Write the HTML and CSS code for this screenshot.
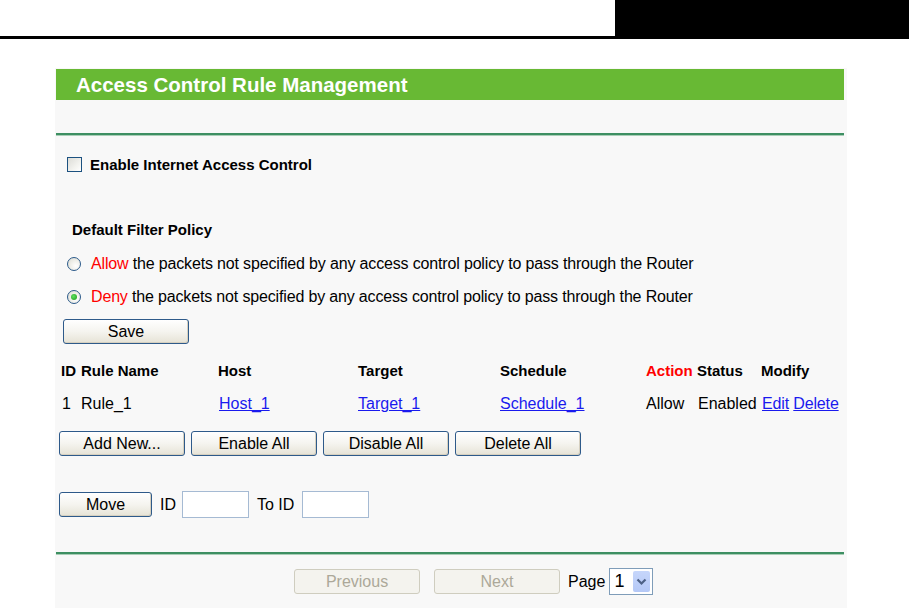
FILE: index.html
```html
<!DOCTYPE html>
<html>
<head>
<meta charset="utf-8">
<link rel="stylesheet" href="styles.css">
</head>
<body>
<div class="topbar">
  <div class="topbar-left"></div>
  <div class="topbar-right"></div>
</div>
<div class="panel">
  <div class="title">Access Control Rule Management</div>
  <div class="rule rule-top"></div>
  <div class="row row-check">
    <span class="checkbox"></span>
    <span class="bold">Enable Internet Access Control</span>
  </div>
  <div class="row row-policy bold">Default Filter Policy</div>
  <div class="row row-radio row-radio1">
    <span class="radio"></span>
    <span><span class="red">Allow</span> the packets not specified by any access control policy to pass through the Router</span>
  </div>
  <div class="row row-radio row-radio2">
    <span class="radio checked"></span>
    <span><span class="red">Deny</span> the packets not specified by any access control policy to pass through the Router</span>
  </div>
  <div class="row row-save">
    <button class="btn btn-save">Save</button>
  </div>
  <div class="table">
    <div class="trow thead">
      <span>ID</span><span>Rule Name</span><span>Host</span><span>Target</span><span>Schedule</span><span class="red">Action</span><span>Status</span><span>Modify</span>
    </div>
    <div class="trow tbody">
      <span>1</span><span>Rule_1</span><a href="#">Host_1</a><a href="#">Target_1</a><a href="#">Schedule_1</a><span>Allow</span><span>Enabled</span><span class="mod"><a href="#">Edit</a> <a href="#">Delete</a></span>
    </div>
  </div>
  <div class="row row-actions">
    <button class="btn">Add New...</button>
    <button class="btn">Enable All</button>
    <button class="btn">Disable All</button>
    <button class="btn">Delete All</button>
  </div>
  <div class="row row-move">
    <button class="btn btn-move">Move</button>
    <span class="lbl-id">ID</span>
    <span class="field field-from"></span>
    <span class="lbl-to">To ID</span>
    <span class="field field-to"></span>
  </div>
  <div class="rule rule-bottom"></div>
  <div class="row row-pager">
    <button class="btn disabled">Previous</button>
    <button class="btn disabled">Next</button>
    <span class="lbl-page">Page</span>
    <span class="select"><span class="sel-val">1</span><span class="sel-btn"><svg width="11" height="8" viewBox="0 0 11 8"><path d="M1.5 1.5 L5.5 5.5 L9.5 1.5" fill="none" stroke="#4d6185" stroke-width="2.2"/></svg></span></span>
  </div>
</div>
</body>
</html>
```
FILE: styles.css
```css
html, body {
  margin: 0;
  padding: 0;
  background: #ffffff;
  font-family: "Liberation Sans", Arial, sans-serif;
  font-size: 16px;
  color: #000;
}
.topbar {
  display: flex;
  height: 39px;
}
.topbar-left {
  flex: 1;
  border-bottom: 3px solid #000;
}
.topbar-right {
  width: 294px;
  background: #000;
}
.panel {
  margin: 29px 0 0 55px;
  width: 792px;
  height: 540px;
  background: #f8f8f8;
  padding-top: 1px;
  box-sizing: border-box;
}
.title {
  margin-left: 1px;
  width: 788px;
  height: 31px;
  background: #68b934;
  color: #fff;
  font-size: 20.5px;
  font-weight: bold;
  line-height: 31px;
  padding-left: 20px;
  box-sizing: border-box;
}
.rule {
  margin-left: 1px;
  width: 788px;
  height: 2px;
  background: #3d8f62;
  border-bottom: 1px solid #a9ceb7;
}
.rule-top { margin-top: 33px; }
.rule-bottom { margin-top: 34px; }
.row {
  display: flex;
  align-items: center;
}
.bold { font-weight: bold; font-size: 15px; }
.red { color: #ff0000; }
.row-check { height: 20px; margin-top: 18px; padding-left: 12px; }
.checkbox {
  width: 13px;
  height: 13px;
  border: 1px solid #1c5180;
  background: linear-gradient(135deg, #dcdcd7 0%, #f2f2ee 60%, #fff 100%);
  margin-right: 8px;
  margin-top: 1px;
}
.row-policy { height: 20px; margin-top: 45px; padding-left: 17px; }
.row-radio { letter-spacing: -0.16px; }
.row-radio1 { height: 20px; margin-top: 15px; padding-left: 12px; }
.row-radio2 { height: 20px; margin-top: 13px; padding-left: 12px; }
.radio {
  width: 12px;
  height: 12px;
  border: 1px solid #2b5a8a;
  border-radius: 50%;
  background: radial-gradient(circle at 65% 65%, #fff 0%, #eeeee8 50%, #d8d8d0 100%);
  margin-right: 10px;
  position: relative;
}
.radio.checked::after {
  content: "";
  position: absolute;
  left: 3px;
  top: 3px;
  width: 6px;
  height: 6px;
  border-radius: 50%;
  background: radial-gradient(circle at 40% 40%, #5fe05f, #1a9a1a);
}
.btn {
  font-family: "Liberation Sans", Arial, sans-serif;
  font-size: 16px;
  color: #000;
  height: 25px;
  width: 126px;
  border: 1px solid #2e5a8a;
  border-radius: 3px;
  background: linear-gradient(#ffffff 0%, #f5f4ef 50%, #e6e3d6 100%);
  box-shadow: inset -1px -1px 0 #d6d0c0;
  padding: 0;
  margin: 0;
}
.row-save { margin-top: 12px; padding-left: 8px; }
.table { margin-top: 16px; padding-left: 6px; }
.trow {
  display: grid;
  grid-template-columns: 20px 137px 140px 142px 146px 51px 64px auto;
  height: 20px;
  align-items: center;
}
.thead { font-weight: bold; font-size: 15px; }
.tbody { margin-top: 14px; }
.tbody span:first-child { padding-left: 1px; }
.tbody a:nth-child(3) { padding-left: 1px; }
.tbody span:nth-child(7) { padding-left: 1px; }
.mod { padding-left: 1px; letter-spacing: -0.15px; }
a { color: #1a1aee; text-decoration: underline; }
.row-actions { margin-top: 17px; padding-left: 4px; gap: 6px; }
.row-move { margin-top: 35px; padding-left: 4px; height: 27px; }
.btn-move { width: 93px; }
.lbl-id { margin-left: 8px; }
.field {
  width: 65px;
  height: 25px;
  border: 1px solid #a5bad3;
  background: #fff;
}
.field-from { margin-left: 6px; }
.field-to { margin-left: 8px; }
.lbl-to { margin-left: 8px; }
.row-pager { margin-top: 13px; padding-left: 239px; height: 27px; }
.btn.disabled {
  color: #aca899;
  border-color: #cfcdbf;
  background: #f4f3ee;
  box-shadow: none;
}
.row-pager .btn + .btn { margin-left: 14px; }
.lbl-page { margin-left: 8px; }
.select {
  margin-left: 4px;
  width: 42px;
  height: 25px;
  border: 1px solid #7f9db9;
  background: #fff;
  display: flex;
  align-items: center;
}
.sel-val { flex: 1; padding-left: 4px; font-size: 18px; }
.sel-btn {
  width: 17px;
  height: 21px;
  margin-right: 2px;
  border-radius: 2px;
  background: linear-gradient(#c6d6fb, #b4c8f6);
  display: flex;
  align-items: center;
  justify-content: center;
}
```
